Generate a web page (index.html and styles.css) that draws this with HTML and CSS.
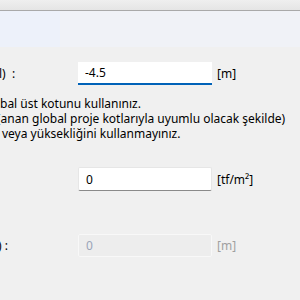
FILE: index.html
```html
<!DOCTYPE html>
<html>
<head>
<meta charset="utf-8">
<link rel="stylesheet" href="styles.css">
</head>
<body>
<div class="topbar"></div>
<div class="header"><div class="header-side"></div></div>
<div class="form">
  <div class="row row-first">
    <div class="label"><span class="clip">l)&nbsp;&nbsp;:</span></div>
    <div class="field focused">-4.5</div>
    <div class="unit">[m]</div>
  </div>
  <div class="note">
    <div class="line">bal üst kotunu kullanınız.</div>
    <div class="line line2">(anan global proje kotlarıyla uyumlu olacak şekilde)</div>
    <div class="line line3">veya yüksekliğini kullanmayınız.</div>
  </div>
  <div class="row row-second">
    <div class="label"></div>
    <div class="field">0</div>
    <div class="unit">[tf/m²]</div>
  </div>
  <div class="row row-third">
    <div class="label"><span class="clip clip3">)&nbsp;:</span></div>
    <div class="field disabled">0</div>
    <div class="unit unit-disabled">[m]</div>
  </div>
</div>
</body>
</html>
```

FILE: styles.css
```css
html, body {
  margin: 0;
  padding: 0;
}
body {
  width: 300px;
  height: 300px;
  overflow: hidden;
  background: #f0f0f0;
  font-family: "Noto Sans", "Open Sans", sans-serif;
  font-size: 12px;
  color: #000;
}
.topbar {
  height: 10px;
  background: linear-gradient(#efefef, #e5e5e5);
  border-bottom: 1px solid #a9a9a9;
}
.header {
  height: 36px;
  background: #f0f2f7;
  display: flex;
}
.header-side {
  width: 60px;
  background: #edf1fa;
}
.form {
  display: flex;
  flex-direction: column;
}
.row {
  display: grid;
  grid-template-columns: 78px 134px auto;
  align-items: center;
}
.row-first { margin-top: 15px; }
.row-second { margin-top: 26px; }
.row-third { margin-top: 43px; }
.label {
  overflow: hidden;
  white-space: nowrap;
}
.clip {
  display: inline-block;
  margin-left: -1px;
}
.clip3 {
  margin-left: -2px;
}
.field {
  box-sizing: border-box;
  height: 24px;
  padding-left: 7px;
  display: flex;
  align-items: center;
  background: #fff;
  border: 1px solid #e6e6e6;
  border-bottom: 1px solid #8a8a8a;
  border-radius: 2px;
}
.field.focused {
  height: 23px;
  border: none;
  border-bottom: 2px solid #0062b8;
  border-radius: 0;
}
.field.disabled {
  height: 23px;
  background: #ededed;
  border: 1px solid #f8f8f8;
  color: #9aa4b8;
}
.unit {
  padding-left: 5px;
}
.unit-disabled {
  color: #a0a0a0;
}
.note {
  margin-top: 11px;
  line-height: 15px;
  white-space: nowrap;
  overflow: hidden;
}
.line2 { margin-left: -3px; }
.line3 { margin-left: 2px; }
```
